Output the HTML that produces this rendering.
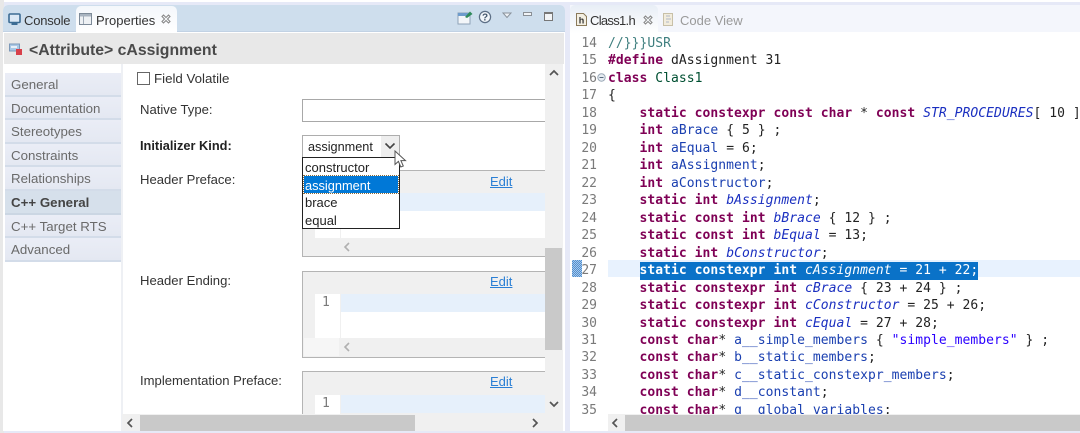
<!DOCTYPE html>
<html><head><meta charset="utf-8"><style>
html,body{margin:0;padding:0;width:1080px;height:433px;overflow:hidden;background:#fff}
*{box-sizing:border-box}
body{position:relative;font-family:"Liberation Sans",sans-serif;font-size:13.1px;color:#222;filter:blur(.3px)}
.a{position:absolute}
.t{position:absolute;white-space:nowrap;line-height:16px;transform:translateY(-7px)}
.side{position:absolute;left:5px;width:116px;height:23.6px;background:linear-gradient(#eaedf6,#e4e8f2);border-bottom:2px solid #d3dce9;color:#6a6a6a;padding-left:6px;line-height:23px;font-size:13.3px}
.code{position:absolute;left:608px;top:35px;width:472px;height:379px;overflow:hidden;font:13px/17.48px "DejaVu Sans Mono",monospace;letter-spacing:.05px;color:#222}
.code div{height:17.48px;white-space:pre}
.nums{position:absolute;left:570px;top:35px;width:27px;height:379px;overflow:hidden;font:13px/17.48px "DejaVu Sans Mono",monospace;color:#7a7a7a;text-align:right}
.nums div{height:17.48px}
b{color:#7f0055}
i{color:#1a3fb0;font-style:normal}
em{color:#1a2fc0}
u.s{color:#2a00ff;text-decoration:none}
.sel{background:#0a72c8;color:#fff;display:inline-block;height:17.48px}
.sel b,.sel em{color:#fff}
.link{color:#2a7fd5;text-decoration:underline}
</style></head><body>

<!-- outer frame -->
<div class="a" style="left:0;top:0;width:1080px;height:433px;background:#e6e9f7"></div>
<div class="a" style="left:0;top:0;width:1080px;height:2px;background:#fff"></div>
<div class="a" style="left:0;top:0;width:4px;height:433px;background:#e8e8e8"></div>

<!-- left panel -->
<div class="a" style="left:3px;top:5px;width:562px;height:426px;background:#fff;border-radius:5px 5px 0 0"></div>
<div class="a" style="left:3px;top:5px;width:562px;height:27px;background:#cedeed;border-radius:5px 5px 0 0;border-bottom:1px solid #c2d2e4"></div>
<!-- active tab -->
<div class="a" style="left:76px;top:6px;width:101px;height:27px;background:linear-gradient(#f4f7fb,#fff);border-radius:5px 5px 0 0"></div>
<svg class="a" style="left:8px;top:13px" width="13" height="14" viewBox="0 0 13 14"><rect x="1" y="1" width="11" height="8.5" rx="1" fill="#dbe8f5" stroke="#3c6c94" stroke-width="1.6"/><rect x="3.5" y="10" width="6" height="2" fill="#3c6c94"/></svg>
<div class="t" style="left:24px;top:20px;font-size:13px;color:#333;letter-spacing:-.2px">Console</div>
<svg class="a" style="left:79px;top:13px" width="13" height="13" viewBox="0 0 13 13"><rect x="0.5" y="0.5" width="12" height="11" fill="#eef1f4" stroke="#7d8a98"/><rect x="1" y="1" width="11" height="2.5" fill="#a9b4c0"/><line x1="4.5" y1="3" x2="4.5" y2="11" stroke="#a0abb8"/></svg>
<div class="t" style="left:96px;top:20px;font-size:13px;color:#333">Properties</div>
<svg class="a" style="left:161px;top:14px" width="10" height="10" viewBox="0 0 10 10" fill="none" stroke="#8a8a8a" stroke-width="1.1"><path d="M1 2.5 2.5 1 5 3.5 7.5 1 9 2.5 6.5 5 9 7.5 7.5 9 5 6.5 2.5 9 1 7.5 3.5 5Z"/></svg>

<!-- toolbar icons -->
<svg class="a" style="left:457px;top:10px" width="16" height="15" viewBox="0 0 16 15"><rect x="1" y="3" width="12" height="11" fill="#f3f6f9" stroke="#8fa3b8"/><rect x="1" y="3" width="12" height="3" fill="#6e9ccc"/><path d="M8 7 13 1.5 15.5 4 10 8Z" fill="#2f8a5a"/></svg>
<svg class="a" style="left:478px;top:10px" width="14" height="14" viewBox="0 0 14 14"><circle cx="7" cy="7" r="5.6" fill="#f2f6fa" stroke="#5d6f86" stroke-width="1.2"/><text x="7" y="10.5" font-size="10" font-family="Liberation Sans" font-weight="bold" text-anchor="middle" fill="#44566c">?</text></svg>
<svg class="a" style="left:502px;top:12px" width="10" height="7" viewBox="0 0 10 7"><path d="M1 1H9L5 5.5Z" fill="#eef2f6" stroke="#8a939c"/></svg>
<div class="a" style="left:523px;top:12px;width:9px;height:4px;background:#f0f3f6;border:1px solid #8a8f95"></div>
<div class="a" style="left:544px;top:12px;width:9px;height:9px;background:#f2f4f6;border:1px solid #777;border-top-width:2px"></div>

<!-- header -->
<div class="a" style="left:4px;top:33px;width:560px;height:31px;background:#e8e8e8"></div>
<svg class="a" style="left:9px;top:43px" width="15" height="13" viewBox="0 0 15 13"><rect x="0.5" y="1" width="10" height="7" fill="#a9c8e6" stroke="#7c98b8"/><rect x="2" y="3" width="6" height="2" fill="#e8f0f8"/><rect x="7" y="6" width="6" height="6" fill="#d8404a"/></svg>
<div class="t" style="left:29px;top:50px;font-size:15.8px;font-weight:bold;color:#4a4a4a">&lt;Attribute&gt; cAssignment</div>

<!-- sidebar -->
<div class="a" style="left:121px;top:64px;width:2px;height:367px;background:#eef0f4"></div>
<div class="side" style="top:73px">General</div>
<div class="side" style="top:96.6px">Documentation</div>
<div class="side" style="top:120.2px">Stereotypes</div>
<div class="side" style="top:143.8px">Constraints</div>
<div class="side" style="top:167.4px">Relationships</div>
<div class="side" style="top:191px;background:#d6e0eb;color:#444;font-weight:bold;border-bottom-color:#cbd6e3">C++ General</div>
<div class="side" style="top:214.6px">C++ Target RTS</div>
<div class="side" style="top:238.2px">Advanced</div>

<!-- form -->
<div class="a" style="left:137px;top:72px;width:13px;height:13px;background:#fff;border:1px solid #666"></div>
<div class="t" style="left:154px;top:78px;font-size:13.3px;color:#333">Field Volatile</div>
<div class="t" style="left:140px;top:109px;color:#333">Native Type:</div>
<div class="a" style="left:302px;top:99px;width:243px;height:23px;background:#fff;border:1px solid #a8a8a8;border-right:0"></div>
<div class="t" style="left:140px;top:145px;font-weight:bold;font-size:12.8px;color:#222">Initializer Kind:</div>
<div class="t" style="left:140px;top:179px;color:#333">Header Preface:</div>
<div class="t" style="left:140px;top:280px;color:#333">Header Ending:</div>
<div class="t" style="left:140px;top:380px;color:#333">Implementation Preface:</div>

<!-- box 1 -->
<div class="a" style="left:302px;top:170px;width:243px;height:87px;background:#f0f0f0;border:1px solid #b4b4b4;border-right:0"></div>
<div class="a" style="left:341px;top:193px;width:204px;height:18px;background:#e6f0fb"></div>
<div class="a" style="left:341px;top:211px;width:204px;height:27px;background:#fff"></div>
<div class="a" style="left:315px;top:226px;width:25px;height:12px;background:#fff"></div>
<div class="t link" style="left:490px;top:181px;font-size:13px">Edit</div>
<svg class="a" style="left:343px;top:242px" width="8" height="10" viewBox="0 0 8 10" fill="none" stroke="#b0b0b0" stroke-width="1.6"><path d="M6 1 2 5 6 9"/></svg>

<!-- box 2 -->
<div class="a" style="left:302px;top:271px;width:243px;height:87px;background:#f0f0f0;border:1px solid #b4b4b4;border-right:0"></div>
<div class="a" style="left:315px;top:294px;width:25px;height:44px;background:#fff"></div>
<div class="a" style="left:341px;top:294px;width:204px;height:18px;background:#e6f0fb"></div>
<div class="a" style="left:341px;top:312px;width:204px;height:26px;background:#fff"></div>
<div class="a" style="left:304px;top:338px;width:35px;height:18px;background:#f6f6f6"></div>
<div class="t link" style="left:490px;top:281px;font-size:13px">Edit</div>
<div class="t" style="left:322px;top:302px;font:13px/16px 'DejaVu Sans Mono',monospace;color:#7a7a7a">1</div>
<svg class="a" style="left:343px;top:342px" width="8" height="10" viewBox="0 0 8 10" fill="none" stroke="#b0b0b0" stroke-width="1.6"><path d="M6 1 2 5 6 9"/></svg>

<!-- box 3 -->
<div class="a" style="left:302px;top:371px;width:243px;height:44px;background:#f0f0f0;border:1px solid #b4b4b4;border-width:1px 0 0 1px"></div>
<div class="a" style="left:315px;top:395px;width:25px;height:20px;background:#fff"></div>
<div class="a" style="left:341px;top:395px;width:204px;height:18px;background:#e6f0fb"></div>
<div class="t link" style="left:490px;top:381px;font-size:13px">Edit</div>
<div class="t" style="left:322px;top:403px;font:13px/16px 'DejaVu Sans Mono',monospace;color:#7a7a7a">1</div>

<!-- combo -->
<div class="a" style="left:302px;top:135px;width:98px;height:23px;background:#fff;border:1px solid #adadad"></div>
<div class="a" style="left:381px;top:136px;width:18px;height:21px;background:#eeeeee"></div>
<svg class="a" style="left:384px;top:142px" width="12" height="8" viewBox="0 0 12 8" fill="none" stroke="#444" stroke-width="1.6"><path d="M1.5 1.5 6 6 10.5 1.5"/></svg>
<div class="t" style="left:308px;top:146px;font-size:12.7px;color:#222">assignment</div>
<!-- dropdown -->
<div class="a" style="left:302px;top:157px;width:98px;height:72px;background:#fff;border:1px solid #222"></div>
<div class="a" style="left:304px;top:176px;width:94px;height:17px;background:#0078d7;outline:1px dotted #8a6a3a"></div>
<div class="t" style="left:305px;top:167px;font-size:13px;color:#222">constructor</div>
<div class="t" style="left:305px;top:185px;font-size:12.8px;color:#fff">assignment</div>
<div class="t" style="left:305px;top:202px;font-size:13px;color:#222">brace</div>
<div class="t" style="left:305px;top:220px;font-size:13px;color:#222">equal</div>
<!-- cursor -->
<svg class="a" style="left:394px;top:150px" width="14" height="19" viewBox="0 0 14 19"><path d="M1 1V14.5L4.4 11.4 6.8 17 9.3 16 6.9 10.6H11.5Z" fill="#fff" stroke="#555" stroke-width="1"/></svg>

<!-- v scrollbar -->
<div class="a" style="left:545px;top:64px;width:18px;height:351px;background:#f0f0f0"></div>
<div class="a" style="left:545px;top:248px;width:17px;height:102px;background:#c9c9c9"></div>
<svg class="a" style="left:549px;top:69px" width="10" height="8" viewBox="0 0 10 8" fill="none" stroke="#555" stroke-width="1.7"><path d="M1 6 5 2 9 6"/></svg>
<svg class="a" style="left:549px;top:400px" width="10" height="8" viewBox="0 0 10 8" fill="none" stroke="#555" stroke-width="1.7"><path d="M1 2 5 6 9 2"/></svg>
<!-- h scrollbar -->
<div class="a" style="left:122px;top:414px;width:441px;height:17px;background:#f0f0f0"></div>
<div class="a" style="left:140px;top:415px;width:275px;height:16px;background:#c9c9c9"></div>
<svg class="a" style="left:126px;top:418px" width="8" height="10" viewBox="0 0 8 10" fill="none" stroke="#555" stroke-width="1.7"><path d="M6 1 2 5 6 9"/></svg>
<svg class="a" style="left:531px;top:418px" width="8" height="10" viewBox="0 0 8 10" fill="none" stroke="#555" stroke-width="1.7"><path d="M2 1 6 5 2 9"/></svg>

<!-- right panel -->
<div class="a" style="left:570px;top:5px;width:510px;height:426px;background:#fff"></div>
<div class="a" style="left:570px;top:5px;width:510px;height:27px;background:#f4f6fc"></div>
<div class="a" style="left:570px;top:5px;width:88px;height:28px;background:linear-gradient(#e8eef6,#fff);border-radius:5px 5px 0 0"></div>
<svg class="a" style="left:576px;top:13px" width="11" height="13" viewBox="0 0 11 13"><path d="M.5.5H7.5L10.5 3.5V12.5H.5Z" fill="#f3efe2" stroke="#8a7a5a"/><text x="5.5" y="10.5" font-size="9" font-weight="bold" font-family="Liberation Sans" text-anchor="middle" fill="#333">h</text></svg>
<div class="t" style="left:590px;top:20px;font-size:13px;letter-spacing:-.7px;color:#333">Class1.h</div>
<svg class="a" style="left:643px;top:15px" width="10" height="10" viewBox="0 0 10 10" fill="none" stroke="#8a8a8a" stroke-width="1.1"><path d="M1 2.5 2.5 1 5 3.5 7.5 1 9 2.5 6.5 5 9 7.5 7.5 9 5 6.5 2.5 9 1 7.5 3.5 5Z"/></svg>
<svg class="a" style="left:663px;top:13px" width="12" height="13" viewBox="0 0 12 13"><rect x=".5" y=".5" width="9" height="12" fill="#f2ecdc" stroke="#c8c0a8"/><path d="M3 3h4M3 6h5M3 9h3" stroke="#b0b8c8"/></svg>
<div class="t" style="left:680px;top:20px;font-size:13px;color:#9a9a9a">Code View</div>

<div class="a" style="left:608px;top:260px;width:472px;height:17.4px;background:#e8f2fe"></div>
<div class="a" style="left:572px;top:260px;width:10px;height:17px;background:repeating-conic-gradient(#4f8fd0 0 25%,#a8c8ea 0 50%) 0 0/2px 2px"></div>
<div class="nums"><div>14</div><div>15</div><div>16</div><div>17</div><div>18</div><div>19</div><div>20</div><div>21</div><div>22</div><div>23</div><div>24</div><div>25</div><div>26</div><div>27</div><div>28</div><div>29</div><div>30</div><div>31</div><div>32</div><div>33</div><div>34</div><div>35</div></div>
<svg class="a" style="left:597px;top:73px" width="9" height="9" viewBox="0 0 9 9"><circle cx="4.5" cy="4.5" r="3.7" fill="#e6ecf2" stroke="#9aa8b6"/><path d="M2.5 4.5h4" stroke="#56697c"/></svg>
<div class="code"><div><span style="color:#3f7f7f">//}}}USR</span></div><div><b>#define</b> dAssignment 31</div><div><b>class</b> <span style="color:#005032">Class1</span></div><div>{</div><div>    <b>static</b> <b>constexpr</b> <b>const</b> <b>char</b> * <b>const</b> <em>STR_PROCEDURES</em>[ 10 ]</div><div>    <b>int</b> <i>aBrace</i> { 5 } ;</div><div>    <b>int</b> <i>aEqual</i> = 6;</div><div>    <b>int</b> <i>aAssignment</i>;</div><div>    <b>int</b> <i>aConstructor</i>;</div><div>    <b>static</b> <b>int</b> <em>bAssignment</em>;</div><div>    <b>static</b> <b>const</b> <b>int</b> <em>bBrace</em> { 12 } ;</div><div>    <b>static</b> <b>const</b> <b>int</b> <em>bEqual</em> = 13;</div><div>    <b>static</b> <b>int</b> <em>bConstructor</em>;</div><div>    <span class="sel"><b>static</b> <b>constexpr</b> <b>int</b> <em>cAssignment</em> = 21 + 22;</span></div><div>    <b>static</b> <b>constexpr</b> <b>int</b> <em>cBrace</em> { 23 + 24 } ;</div><div>    <b>static</b> <b>constexpr</b> <b>int</b> <em>cConstructor</em> = 25 + 26;</div><div>    <b>static</b> <b>constexpr</b> <b>int</b> <em>cEqual</em> = 27 + 28;</div><div>    <b>const</b> <b>char</b>* <i>a__simple_members</i> { <u class="s">"simple_members"</u> } ;</div><div>    <b>const</b> <b>char</b>* <i>b__static_members</i>;</div><div>    <b>const</b> <b>char</b>* <i>c__static_constexpr_members</i>;</div><div>    <b>const</b> <b>char</b>* <i>d__constant</i>;</div><div>    <b>const</b> <b>char</b>* <i>g__global_variables</i>;</div></div>
<!-- editor h scrollbar -->
<div class="a" style="left:608px;top:414px;width:472px;height:17px;background:#f0f0f0"></div>
<div class="a" style="left:625px;top:415px;width:455px;height:16px;background:#c9c9c9"></div>
<svg class="a" style="left:611px;top:418px" width="8" height="10" viewBox="0 0 8 10" fill="none" stroke="#555" stroke-width="1.7"><path d="M6 1 2 5 6 9"/></svg>
</body></html>
